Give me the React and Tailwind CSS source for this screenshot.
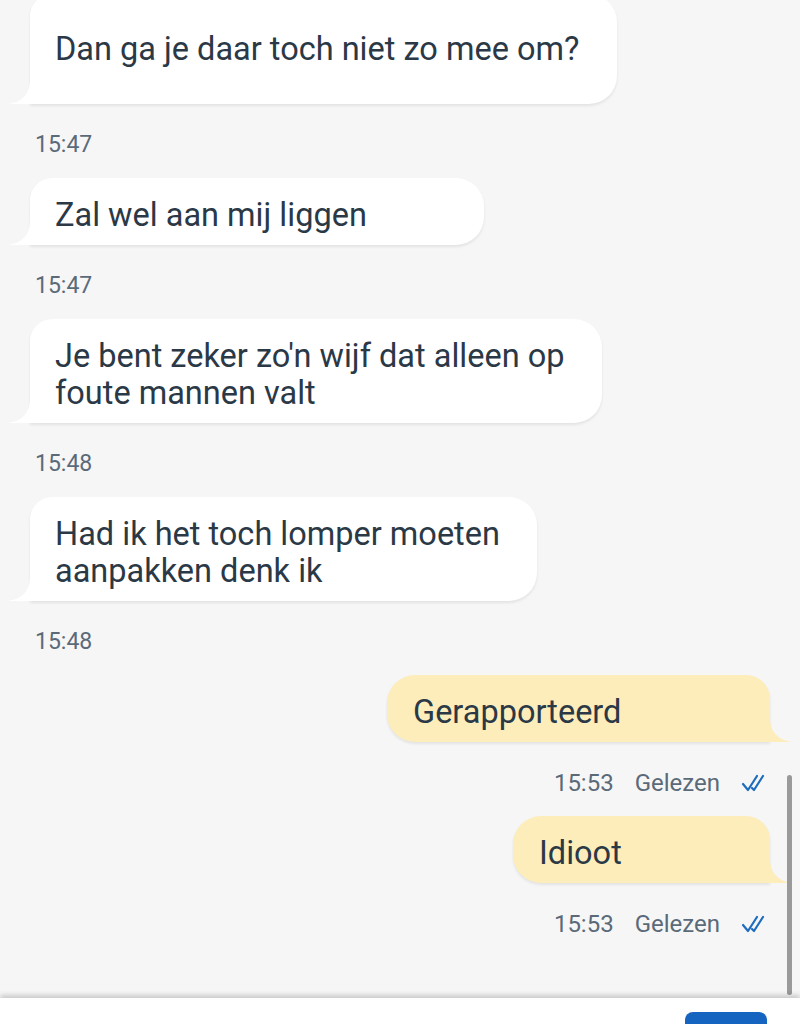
import React from "react";

const font = { fontFamily: "Roboto, 'Noto Sans', sans-serif" };

const received = [
  { text: "Dan ga je daar toch niet zo mee om?", w: "w-[587px]", time: "15:47", first: true },
  { text: "Zal wel aan mij liggen", w: "w-[454px]", time: "15:47" },
  { text: "Je bent zeker zo'n wijf dat alleen op foute mannen valt", w: "w-[572px]", time: "15:48" },
  { text: "Had ik het toch lomper moeten aanpakken denk ik", w: "w-[507px]", time: "15:48" },
];

const sent = [
  { text: "Gerapporteerd", w: "w-[383px]", time: "15:53" },
  { text: "Idioot", w: "w-[257px]", time: "15:53" },
];

const TailLeft = () => (
  <svg width="24" height="24" viewBox="0 0 24 24" className="absolute -left-[22px] bottom-0">
    <path d="M24 0 L24 24 L0 24 C14 22 22 14 22 0 Z" fill="#ffffff" />
  </svg>
);

const TailRight = () => (
  <svg width="24" height="24" viewBox="0 0 24 24" className="absolute -right-[22px] bottom-0">
    <path d="M0 0 L0 24 L24 24 C10 22 2 14 2 0 Z" fill="#fdedbb" />
  </svg>
);

const Checks = () => (
  <svg width="28" height="20" viewBox="0 0 28 20" fill="none" stroke="#1e6cbf" strokeWidth="2.2" strokeLinecap="round" strokeLinejoin="round">
    <path d="M2 11 L7 17 L16 3" />
    <path d="M11 15 L13 17 L22 3" />
  </svg>
);

const Received = ({ item }) => (
  <div className="flex flex-col items-start">
    <div
      className={`relative ml-[30px] ${item.w} bg-white rounded-tl-[22px] rounded-r-[28px] shadow-[0_2px_3px_rgba(0,0,0,0.08)] pl-[25px] pr-[30px] text-[32.5px] leading-[37px] text-[#2b3947] ${
        item.first ? "-mt-[6px] h-[110px] flex items-center" : "pt-[19px] pb-[11px]"
      }`}
    >
      <TailLeft />
      <span>{item.text}</span>
    </div>
    <div className="mt-[27px] ml-[35px] h-[28px] leading-[28px] text-[23px] text-[#5b6a79]">{item.time}</div>
  </div>
);

const Sent = ({ item }) => (
  <div className="flex flex-col items-end">
    <div
      className={`relative mr-[30px] ${item.w} bg-[#fdedbb] rounded-l-[28px] rounded-tr-[24px] shadow-[0_2px_3px_rgba(0,0,0,0.08)] pl-[26px] pr-[30px] pt-[19px] pb-[11px] text-[32.5px] leading-[37px] text-[#2b3947]`}
    >
      <TailRight />
      <span>{item.text}</span>
    </div>
    <div className="mt-[27px] mr-[31px] h-[28px] flex items-center gap-[21px] text-[24px] text-[#5b6a79]">
      <span>{item.time}</span>
      <span>Gelezen</span>
      <Checks />
    </div>
  </div>
);

export default function App() {
  return (
    <div className="w-[800px] h-[1024px] overflow-hidden flex flex-col bg-white" style={font}>
      <div className="relative flex-1 bg-[#f6f6f6] overflow-hidden flex flex-col gap-[19px]">
        {received.map((item, i) => (
          <Received key={i} item={item} />
        ))}
        {sent.map((item, i) => (
          <Sent key={i} item={item} />
        ))}
        <div className="absolute right-[8px] top-[775px] w-[5px] h-[220px] rounded-full bg-[#9a9a9a]" />
      </div>
      <div className="relative h-[26px] bg-white shadow-[0_-3px_5px_rgba(0,0,0,0.18)] flex justify-end items-end pr-[33px]">
        <div className="w-[82px] h-[12px] rounded-t-[8px] bg-[#1565c0]" />
      </div>
    </div>
  );
}
